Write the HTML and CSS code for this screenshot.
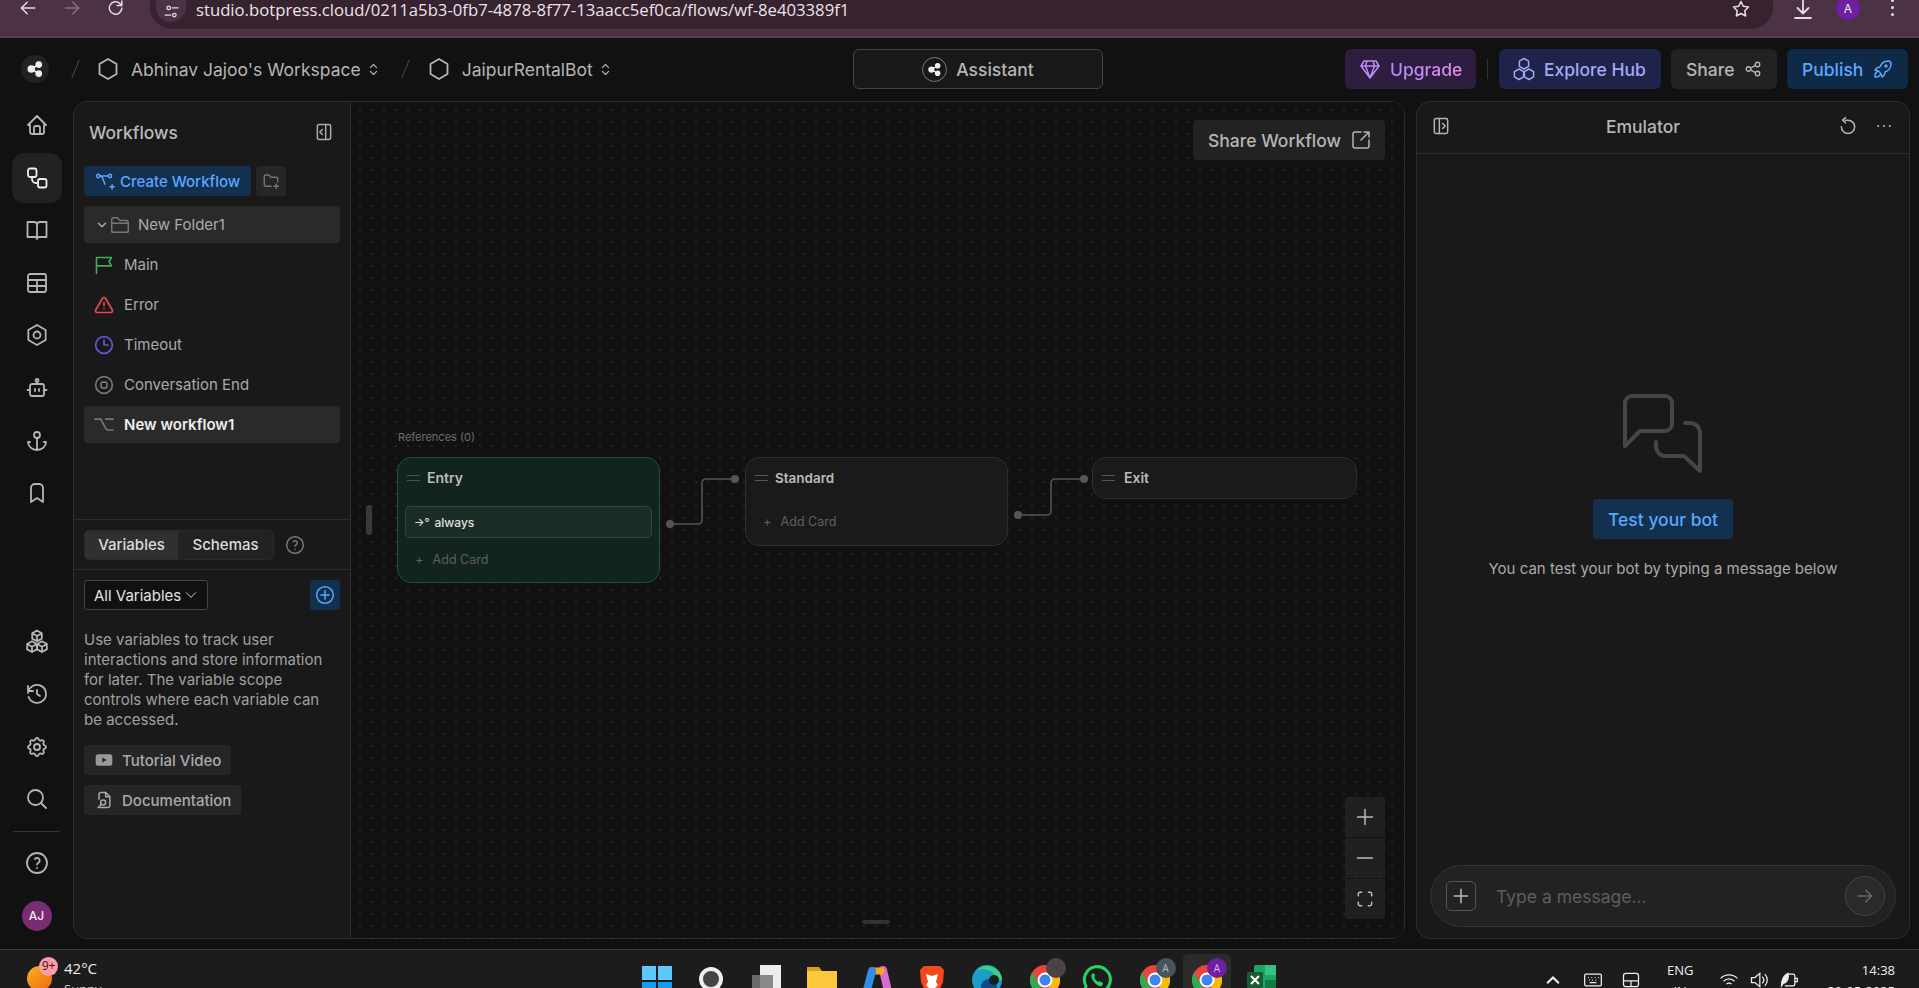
FILE: index.html
```html
<!DOCTYPE html>
<html lang="en">
<head>
<meta charset="utf-8">
<title>JaipurRentalBot - Botpress Studio</title>
<link rel="stylesheet" href="styles.css">
</head>
<body>

<!-- browser toolbar, cut off at the top of the shot -->
<div class="browser">
  <svg class="ic nav" viewBox="0 0 24 24"><path d="M20 12H5M11 5l-7 7 7 7"/></svg>
  <svg class="ic nav nav-off" viewBox="0 0 24 24"><path d="M4 12h15M13 5l7 7-7 7"/></svg>
  <svg class="ic nav" viewBox="0 0 24 24"><path d="M19 12a7.500 7.500 0 1 1-2.400-5.500L19 9M19 3.500V9h-5.500"/></svg>
  <div class="address">
    <span class="site-info"><svg class="ic" viewBox="0 0 24 24"><circle cx="8" cy="7" r="2.500"/><path d="M13 7h8M3 17h8"/><circle cx="16" cy="17" r="2.500"/></svg></span>
    <span class="url">studio.botpress.cloud/0211a5b3-0fb7-4878-8f77-13aacc5ef0ca/flows/wf-8e403389f1</span>
    <svg class="ic star" viewBox="0 0 24 24"><path d="M12 3l2.800 5.800 6.200.9-4.500 4.400 1.100 6.300L12 17.400 6.400 20.400l1.100-6.300L3 9.700l6.200-.9z"/></svg>
  </div>
  <svg class="ic download" viewBox="0 0 24 24"><path d="M12 2v13M6.500 10l5.500 5.500 5.500-5.500M4 20h16"/></svg>
  <span class="profile">A</span>
  <span class="kebab"><i></i><i></i><i></i></span>
</div>

<!-- studio header -->
<header class="topbar">
  <div class="crumbs">
    <span class="logo"><svg class="share-mark" viewBox="0 0 24 24"><path d="M7 12l10-6M7 12l10 6"/><circle cx="7" cy="12" r="4"/><circle cx="17" cy="6" r="3.500"/><circle cx="17" cy="18" r="3.500"/></svg></span>
    <span class="slash"></span>
    <svg class="ic hexa" viewBox="0 0 24 24"><path d="M12 2l8.500 5v10L12 22l-8.500-5V7z"/></svg>
    <span class="crumb">Abhinav Jajoo's Workspace</span>
    <svg class="ic updown" viewBox="0 0 24 24"><path d="M7 9l5-5 5 5M7 15l5 5 5-5"/></svg>
    <span class="slash"></span>
    <svg class="ic hexa" viewBox="0 0 24 24"><path d="M12 2l8.500 5v10L12 22l-8.500-5V7z"/></svg>
    <span class="crumb">JaipurRentalBot</span>
    <svg class="ic updown" viewBox="0 0 24 24"><path d="M7 9l5-5 5 5M7 15l5 5 5-5"/></svg>
  </div>
  <button class="assistant">
    <span class="assistant-mark"><svg class="share-mark" viewBox="0 0 24 24"><path d="M7 12l10-6M7 12l10 6"/><circle cx="7" cy="12" r="4"/><circle cx="17" cy="6" r="3.500"/><circle cx="17" cy="18" r="3.500"/></svg></span>
    Assistant
  </button>
  <div class="actions">
    <button class="act act-upgrade"><svg class="ic big" viewBox="0 0 24 24"><path d="M6 4h12l3 5-9 12L3 9zM3 9h18M9 4l-1.500 5L12 21l4.500-12L15 4"/></svg><span class="upgrade-text">Upgrade</span></button>
    <span class="act-sep"></span>
    <button class="act act-hub"><svg class="ic big" viewBox="0 0 24 24"><path d="M12 1.500l4.600 2.600v5.200L12 12 7.400 9.300V4.100zM7 12l4.600 2.600v5.200L7 22.500l-4.600-2.700v-5.200zM17 12l4.600 2.600v5.200L17 22.500l-4.600-2.700v-5.200z"/></svg>Explore Hub</button>
    <button class="act act-share">Share<svg class="ic ic-18" viewBox="0 0 24 24"><circle cx="6" cy="12" r="3"/><circle cx="18" cy="6" r="3"/><circle cx="18" cy="18" r="3"/><path d="M8.700 10.700l6.600-3.400M8.700 13.300l6.600 3.400"/></svg></button>
    <button class="act act-publish">Publish<svg class="ic big" viewBox="0 0 24 24"><path d="M4 13a8 8 0 0 1 7 7 6 6 0 0 0 3-5 9 9 0 0 0 6-8 3 3 0 0 0-3-3 9 9 0 0 0-8 6 6 6 0 0 0-5 3"/><path d="M7 14a6 6 0 0 0-3 6 6 6 0 0 0 6-3"/><circle cx="15" cy="9" r="1"/></svg></button>
  </div>
</header>

<div class="main">
  <nav class="rail">
    <a class="rail-item"><svg class="ic" viewBox="0 0 24 24"><path d="M5 12H3l9-9 9 9h-2v7a2 2 0 0 1-2 2H7a2 2 0 0 1-2-2z"/><path d="M9 21v-6a2 2 0 0 1 2-2h2a2 2 0 0 1 2 2v6"/></svg></a>
    <a class="rail-item rail-on"><svg class="ic" viewBox="0 0 24 24"><rect x="3" y="2.500" width="8.500" height="8.500" rx="2"/><rect x="13" y="13" width="8.500" height="8.500" rx="2"/><path d="M7 11v2a4 4 0 0 0 4 4h2"/></svg></a>
    <a class="rail-item"><svg class="ic" viewBox="0 0 24 24"><path d="M2.500 4H9a3 3 0 0 1 3 3v14a2 2 0 0 0-2-2H2.500zM21.500 4H15a3 3 0 0 0-3 3v14a2 2 0 0 1 2-2h7.500z"/></svg></a>
    <a class="rail-item"><svg class="ic" viewBox="0 0 24 24"><rect x="3" y="3" width="18" height="18" rx="2"/><path d="M3 9h18M3 15h18M12 9v12"/></svg></a>
    <a class="rail-item"><svg class="ic" viewBox="0 0 24 24"><path d="M12 2l8.660 5v10L12 22l-8.660-5V7z"/><circle cx="12" cy="12" r="3.500"/></svg></a>
    <a class="rail-item"><svg class="ic" viewBox="0 0 24 24"><rect x="5" y="8" width="14" height="12" rx="2"/><path d="M12 8V6M2.500 14h2.500M19 14h2.500M10 13v2M14 13v2"/><circle cx="12" cy="4.500" r="1.500"/></svg></a>
    <a class="rail-item"><svg class="ic" viewBox="0 0 24 24"><path d="M12 9v12M3 13a9 8 0 0 0 18 0M21 13h-2M5 13H3"/><circle cx="12" cy="6" r="3"/></svg></a>
    <a class="rail-item"><svg class="ic" viewBox="0 0 24 24"><path d="M18 7v14l-6-4-6 4V7a4 4 0 0 1 4-4h4a4 4 0 0 1 4 4z"/></svg></a>
    <div class="rail-low">
      <a class="rail-item"><svg class="ic" viewBox="0 0 24 24"><path d="M12 1.500l4.800 2.700v5.400L12 12.300 7.200 9.600V4.200zM7 12.300l4.800 2.700v5.400L7 23l-4.800-2.600V15zM17 12.300l4.800 2.700v5.400L17 23l-4.800-2.600V15zM7.200 4.200L12 7l4.800-2.800M12 7v5.300M2.200 15L7 17.700 11.800 15M7 17.700V23M12.200 15l4.800 2.700 4.800-2.700M17 17.700V23"/></svg></a>
      <a class="rail-item"><svg class="ic" viewBox="0 0 24 24"><path d="M12 8v4l3 2"/><path d="M3.050 11a9 9 0 1 1 .5 4M3 4v5h5"/></svg></a>
      <a class="rail-item"><svg class="ic" viewBox="0 0 24 24"><path d="M10.325 4.317c.426-1.756 2.924-1.756 3.350 0a1.724 1.724 0 0 0 2.573 1.066c1.543-.94 3.310.826 2.370 2.370a1.724 1.724 0 0 0 1.065 2.572c1.756.426 1.756 2.924 0 3.350a1.724 1.724 0 0 0-1.066 2.573c.94 1.543-.826 3.310-2.370 2.370a1.724 1.724 0 0 0-2.572 1.065c-.426 1.756-2.924 1.756-3.350 0a1.724 1.724 0 0 0-2.573-1.066c-1.543.94-3.310-.826-2.370-2.370a1.724 1.724 0 0 0-1.065-2.572c-1.756-.426-1.756-2.924 0-3.350a1.724 1.724 0 0 0 1.066-2.573c-.94-1.543.826-3.310 2.370-2.370 1 .608 2.296.07 2.572-1.065z"/><circle cx="12" cy="12" r="3"/></svg></a>
      <a class="rail-item"><svg class="ic" viewBox="0 0 24 24"><circle cx="10.500" cy="10.500" r="7.500"/><path d="M21 21l-5-5"/></svg></a>
      <div class="rail-rule"></div>
      <a class="rail-item"><svg class="ic" viewBox="0 0 24 24"><circle cx="12" cy="12" r="10"/><path d="M12 17v.01M12 13.500a1.500 1.500 0 0 1 1-1.500 2.600 2.600 0 1 0-3-4"/></svg></a>
      <span class="avatar">AJ</span>
    </div>
  </nav>

  <section class="studio">
    <aside class="side">
      <div class="side-top">
        <div class="side-head">
          <h2>Workflows</h2>
          <svg class="ic ic-20" viewBox="0 0 24 24"><rect x="4" y="3" width="16" height="18" rx="2"/><path d="M14 3v18M10 9l-3 3 3 3"/></svg>
        </div>
        <div class="side-btns">
          <button class="btn-create"><svg class="ic ic-20" viewBox="0 0 24 24"><circle cx="4" cy="6" r="2"/><circle cx="18" cy="6" r="2"/><path d="M6 6h10M8 6l4 10M18 19h5M20.500 16.500v5"/></svg>Create Workflow</button>
          <button class="btn-folder"><svg class="ic ic-18" viewBox="0 0 24 24"><path d="M12 19H5a2 2 0 0 1-2-2V6a2 2 0 0 1 2-2h4l3 3h7a2 2 0 0 1 2 2v4M16 19h6M19 16v6"/></svg></button>
        </div>
        <ul class="flows">
          <li class="flow flow-on flow-folder"><svg class="ic chev" viewBox="0 0 24 24"><path d="M6 9l6 6 6-6"/></svg><svg class="ic ic-20 dim" viewBox="0 0 24 24"><path d="M3 19V6a2 2 0 0 1 2-2h4l3 3h7a2 2 0 0 1 2 2v10a1 1 0 0 1-1 1H4a1 1 0 0 1-1-1zM3 10h18"/></svg>New Folder1</li>
          <li class="flow"><svg class="ic ic-20 green" viewBox="0 0 24 24"><path d="M3 22V3h18l-3 5 3 5H3"/></svg>Main</li>
          <li class="flow"><svg class="ic ic-20 red" viewBox="0 0 24 24"><path d="M12 9v4M12 16.500v.01M10.300 3.900L2 18a2 2 0 0 0 1.700 3h16.600a2 2 0 0 0 1.700-3L13.700 3.900a2 2 0 0 0-3.400 0z"/></svg>Error</li>
          <li class="flow"><svg class="ic ic-20 indigo" viewBox="0 0 24 24"><circle cx="12" cy="12" r="10"/><path d="M12 6v6h5"/></svg>Timeout</li>
          <li class="flow"><svg class="ic ic-20 dim" viewBox="0 0 24 24"><circle cx="12" cy="12" r="10"/><rect x="8.500" y="8.500" width="7" height="7" rx="1.500"/></svg>Conversation End</li>
          <li class="flow flow-on flow-bold"><svg class="ic ic-20 dim" viewBox="0 0 24 24"><path d="M1 5h7l6 11a3 3 0 0 0 3 2h6M14 5h9"/></svg>New workflow1</li>
        </ul>
      </div>

      <div class="side-tabs">
        <div class="tabs">
          <span class="tab tab-on">Variables</span>
          <span class="tab">Schemas</span>
        </div>
        <svg class="ic ic-20 dim" viewBox="0 0 24 24"><circle cx="12" cy="12" r="10"/><path d="M12 17v.01M12 13.500a1.500 1.500 0 0 1 1-1.500 2.600 2.600 0 1 0-3-4"/></svg>
      </div>

      <div class="side-vars">
        <div class="vars-row">
          <button class="select">All Variables<svg class="ic ic-14" viewBox="0 0 24 24"><path d="M4 8l8 8 8-8"/></svg></button>
          <button class="btn-add"><svg class="ic ic-20" viewBox="0 0 24 24"><circle cx="12" cy="12" r="10"/><path d="M12 7v10M7 12h10"/></svg></button>
        </div>
        <p class="vars-help">Use variables to track user interactions and store information for later. The variable scope controls where each variable can be accessed.</p>
        <button class="btn-link"><svg class="yt" viewBox="0 0 24 24"><rect x="2" y="5" width="20" height="14" rx="3"/><path class="yt-play" d="M10 9l5 3-5 3z"/></svg>Tutorial Video</button>
        <button class="btn-link"><svg class="ic ic-20" viewBox="0 0 24 24"><path d="M7 21h10a2 2 0 0 0 2-2V8l-5-5H8a2 2 0 0 0-2 2v6"/><circle cx="11" cy="15" r="3"/><path d="M8.800 17.200L5 21M19 8h-5V3"/></svg>Documentation</button>
      </div>
    </aside>

    <div class="canvas">
      <svg class="wires" viewBox="0 0 1053 836">
        <path d="M319 422H347q4 0 4-4V381q0-4 4-4H384"/>
        <path d="M667 413H696q4 0 4-4V381q0-4 4-4H733"/>
        <circle cx="319" cy="422" r="4"/>
        <circle cx="384" cy="377" r="4"/>
        <circle cx="667" cy="413" r="4"/>
        <circle cx="733" cy="377" r="4"/>
      </svg>

      <button class="share-flow">Share Workflow<svg class="ic big" viewBox="0 0 24 24"><path d="M12 4H6a2 2 0 0 0-2 2v12a2 2 0 0 0 2 2h12a2 2 0 0 0 2-2v-6M12 12l8-8M15 4h5v5"/></svg></button>

      <span class="refs">References (0)</span>

      <div class="node node-entry">
        <div class="node-head"><span class="grip"></span>Entry</div>
        <div class="card-always"><span class="always-arrow">&#8594;&#176;</span>always</div>
        <div class="add-card"><span>+</span>Add Card</div>
      </div>
      <div class="node node-std">
        <div class="node-head"><span class="grip"></span>Standard</div>
        <div class="add-card add-card-std"><span>+</span>Add Card</div>
      </div>
      <div class="node node-exit">
        <div class="node-head"><span class="grip"></span>Exit</div>
      </div>

      <span class="drag-left"></span>
      <span class="drag-bottom"></span>

      <div class="zoomer">
        <button><svg class="ic ic-20" viewBox="0 0 24 24"><path d="M12 3v18M3 12h18"/></svg></button>
        <button><svg class="ic ic-20" viewBox="0 0 24 24"><path d="M3 12h18"/></svg></button>
        <button><svg class="ic ic-20" viewBox="0 0 24 24"><path d="M4 8V6a2 2 0 0 1 2-2h2M16 4h2a2 2 0 0 1 2 2v2M20 16v2a2 2 0 0 1-2 2h-2M8 20H6a2 2 0 0 1-2-2v-2"/></svg></button>
      </div>
    </div>
  </section>

  <section class="emu">
    <div class="emu-head">
      <svg class="ic ic-20" viewBox="0 0 24 24"><rect x="4" y="3" width="16" height="18" rx="2"/><path d="M10 3v18M14 9l3 3-3 3"/></svg>
      <span class="emu-title">Emulator</span>
      <svg class="ic ic-20" viewBox="0 0 24 24"><path d="M9 5h3a8 8 0 1 1-8 8M9 2L5.500 5 9 8"/></svg>
      <svg class="ic ic-20 emu-more" viewBox="0 0 24 24"><path d="M5 12v.01M12 12v.01M19 12v.01"/></svg>
    </div>
    <div class="emu-body">
      <svg class="chat-ic" viewBox="0 0 80 80"><path d="M2 52V9a7 7 0 0 1 7-7h33a7 7 0 0 1 7 7v21a7 7 0 0 1-7 7H17z"/><path d="M62 29h5a10 10 0 0 1 10 9v39L61 62H41a10 10 0 0 1-8-9v-5"/></svg>
      <button class="btn-test">Test your bot</button>
      <p class="emu-hint">You can test your bot by typing a message below</p>
    </div>
    <div class="composer">
      <button class="composer-add"><svg class="ic ic-20" viewBox="0 0 24 24"><path d="M12 4v16M4 12h16"/></svg></button>
      <span class="composer-ph">Type a message...</span>
      <button class="composer-send"><svg class="ic ic-20" viewBox="0 0 24 24"><path d="M4 12h16M13 5l7 7-7 7"/></svg></button>
    </div>
  </section>
</div>

<!-- windows taskbar, also cut off by the shot -->
<footer class="taskbar">
  <div class="weather">
    <span class="sun"></span>
    <span class="badge">9+</span>
    <div class="weather-text"><b>42°C</b><span>Sunny</span></div>
  </div>

  <div class="apps">
    <span class="app"><svg viewBox="0 0 30 30"><path fill="#5cc8fb" d="M0 1h14v14H0zM16 1h14v14H16z"/><path fill="#1a9bf0" d="M0 17h14v14H0zM16 17h14v14H16z"/></svg></span>
    <span class="app"><svg viewBox="0 0 30 30"><circle cx="14" cy="14" r="10" fill="#444" stroke="#eee" stroke-width="4"/><path d="M20 22l6 7" stroke="#eee" stroke-width="4"/></svg></span>
    <span class="app"><svg viewBox="0 0 30 30"><rect x="8" y="0" width="21" height="26" fill="#ededed"/><rect x="0" y="10" width="21" height="24" fill="#777" opacity=".85"/></svg></span>
    <span class="app"><svg viewBox="0 0 30 30"><path fill="#d9a11a" d="M0 2h12l3 4H0z"/><rect y="6" width="30" height="26" fill="#fcc93d"/><rect x="6" y="25" width="18" height="8" fill="#2c8fd6"/></svg></span>
    <span class="app"><svg viewBox="0 0 30 30"><path d="M21 5l4 17" stroke="#d96bd0" stroke-width="8" stroke-linecap="round"/><path d="M10 6h9" stroke="#f5a623" stroke-width="7" stroke-linecap="round"/><path d="M10 6L5 25" stroke="#2f8fe8" stroke-width="8" stroke-linecap="round"/></svg></span>
    <span class="app"><svg viewBox="0 0 30 30"><path fill="#f4481d" d="M7 1h16l4 4-1 12-5 11-6 3-6-3-5-11L3 5z"/><path fill="#fff" d="M9 9l6 2 6-2-2 8 2 3-6 6-6-6 2-3z"/></svg></span>
    <span class="app"><svg viewBox="0 0 30 30"><circle cx="15" cy="15" r="15" fill="#18a0c9"/><path fill="#3ed07a" d="M30 15A15 15 0 0 0 4 6c8-4 20-1 20 9z"/><circle cx="17" cy="22" r="8" fill="#0c4c8a"/><circle cx="22" cy="15" r="5" fill="#1c1c1c"/></svg></span>
    <span class="app"><svg class="chrome" viewBox="0 0 30 30"><use href="#chrome-logo"/></svg><span class="pin pin-photo"></span></span>
    <span class="app"><svg viewBox="0 0 30 30"><path d="M2 28l2-7A13 13 0 1 1 9 26z" fill="none" stroke="#25d366" stroke-width="3"/><path d="M10 9q-2 3 2 8t8 4l1-3-4-2-1 1q-3-2-4-5l1-1-1-3z" fill="#25d366"/></svg></span>
    <span class="app"><svg class="chrome" viewBox="0 0 30 30"><use href="#chrome-logo"/></svg><span class="pin pin-gray">A</span></span>
    <span class="app app-on"><svg class="chrome" viewBox="0 0 30 30"><use href="#chrome-logo"/></svg><span class="pin pin-purple">A</span></span>
    <span class="app"><svg viewBox="0 0 30 30"><rect x="7" y="0" width="22" height="30" rx="2" fill="#21a366"/><rect x="18" y="0" width="11" height="10" fill="#33c481"/><rect x="18" y="15" width="11" height="15" fill="#107c41"/><rect x="0" y="7" width="16" height="16" rx="1" fill="#185c37"/><path d="M4 11l8 8M12 11l-8 8" stroke="#fff" stroke-width="2"/></svg></span>
  </div>

  <div class="tray">
    <svg class="tray-ic chevup" viewBox="0 0 24 24"><path d="M5 16l7-7 7 7"/></svg>
    <svg class="tray-ic tray-kbd" viewBox="0 0 24 24"><rect x="2" y="5" width="20" height="14" rx="1.500"/><path d="M6 9h1M10 9h1M14 9h1M18 9h1M7 12h1M11 12h1M15 12h1M8 15h8"/></svg>
    <svg class="tray-ic tray-tablet" viewBox="0 0 24 24"><rect x="3" y="4" width="18" height="16" rx="3"/><path d="M3 13h18M12 13v7"/></svg>
    <div class="lang">ENG<br>IN</div>
    <svg class="tray-ic" viewBox="0 0 24 24"><path d="M2 10a14 14 0 0 1 20 0M5.500 13.500a9 9 0 0 1 13 0M9 17a4 4 0 0 1 6 0M12 20v.5"/></svg>
    <svg class="tray-ic" viewBox="0 0 24 24"><path d="M3 9v6h4l6 5V4L7 9zM16 8a6 6 0 0 1 0 8M19 5a10 10 0 0 1 0 14"/></svg>
    <svg class="tray-ic" viewBox="0 0 24 24"><path d="M9 5h8a2 2 0 0 1 2 2v10a2 2 0 0 1-2 2H7M19 10h3v4h-3"/><path class="leaf" d="M3 19c0-8 3-13 8-15 1 6-1 11-6 12z"/></svg>
    <div class="clock">14:38<br>20-05-2025</div>
  </div>
</footer>

<svg class="defs" width="0" height="0">
  <symbol id="chrome-logo" viewBox="0 0 30 30">
    <circle cx="15" cy="15" r="15" fill="#e8453c"/>
    <path fill="#34a853" d="M15 30A15 15 0 0 1 2 7.500L9.500 20z"/>
    <path fill="#fbbc05" d="M15 30a15 15 0 0 0 13-22.500H15L21 19z"/>
    <circle cx="15" cy="15" r="7.500" fill="#fff"/>
    <circle cx="15" cy="15" r="5.500" fill="#3c85f0"/>
  </symbol>
</svg>

</body>
</html>
```

FILE: styles.css
```css
* { box-sizing: border-box; }

html, body { margin: 0; height: 100%; }

body {
  width: 1919px;
  height: 988px;
  overflow: hidden;
  display: flex;
  flex-direction: column;
  background: #111;
  color: #b5b5b5;
  font-family: Inter, "Liberation Sans", sans-serif;
  font-size: 15px;
}

button {
  font: inherit;
  color: inherit;
  border: 0;
  background: none;
  padding: 0;
  display: inline-flex;
  align-items: center;
}

h2, p, ul { margin: 0; padding: 0; }

.ic {
  width: 24px;
  height: 24px;
  flex: none;
  fill: none;
  stroke: currentColor;
  stroke-width: 1.8;
  stroke-linecap: round;
  stroke-linejoin: round;
}

.ic-20 { width: 20px; height: 20px; }
.ic-18 { width: 18px; height: 18px; }
.ic-14 { width: 14px; height: 14px; }
.big { margin: 0 -2px; stroke-width: 1.500; }
.dim { color: #777; }
.green { color: #46a758; }
.red { color: #e5484d; }
.indigo { color: #5b5bd6; }
.defs { position: absolute; }

/* browser */
.browser {
  height: 38px;
  flex: none;
  display: flex;
  align-items: flex-start;
  background: #4b3245;
  border-bottom: 2px solid #57404f;
  color: #e6dbe2;
}

.nav { width: 20px; height: 20px; margin: -2px 0 0 18px; }
.nav + .nav { margin-left: 24px; }
.nav-off { color: #86707f; }

.address {
  width: 1623px;
  height: 29px;
  margin-left: 24px;
  padding-left: 6px;
  display: flex;
  align-items: flex-start;
  background: #37222f;
  border-radius: 0 0 22px 22px;
}

.site-info {
  width: 30px;
  height: 22px;
  display: flex;
  align-items: center;
  justify-content: center;
  background: #4b3245;
  border-radius: 0 0 15px 15px;
}

.site-info .ic { width: 17px; height: 17px; }

.url {
  margin: 0 0 0 10px;
  font-family: "Open Sans", sans-serif;
  font-size: 16.700px;
  line-height: 20px;
  color: #ece4e9;
}

.star { width: 20px; height: 20px; margin: -1px 22px 0 auto; }
.download { width: 24px; height: 24px; margin: -2px 0 0 18px; }

.profile {
  width: 24px;
  height: 24px;
  margin: -4px 0 0 21px;
  border-radius: 50%;
  background: #6f1fa0;
  color: #eee;
  font-size: 12px;
  line-height: 26px;
  text-align: center;
}

.kebab {
  margin: -1px 0 0 31px;
  display: flex;
  flex-direction: column;
  gap: 4px;
}

.kebab i { width: 3px; height: 3px; border-radius: 50%; background: #e6dbe2; }

/* header */
.topbar {
  height: 63px;
  flex: none;
  padding: 11px 11px 0 21px;
  display: grid;
  grid-template-columns: 832px 250px 1fr;
  align-items: start;
}

.crumbs { height: 40px; display: flex; align-items: center; font-size: 17.500px; }

.logo {
  width: 28px;
  height: 28px;
  border-radius: 50%;
  background: #222;
  display: flex;
  align-items: center;
  justify-content: center;
}

.share-mark { width: 18px; height: 18px; fill: #eee; stroke: #eee; stroke-width: 2; }

.slash {
  width: 1px;
  height: 20px;
  margin: 0 20px 0 26px;
  background: #444;
  transform: rotate(22deg);
}

.hexa { margin-right: 12px; }
.hexa + .crumb { margin-left: -1px; }
.updown { width: 15px; height: 15px; margin: 1px 0 0 5px; }
.updown + .slash { margin: 0 21px 0 24px; }

.assistant {
  height: 40px;
  justify-content: center;
  gap: 9px;
  background: #181818;
  border: 1px solid #444;
  border-radius: 6px;
  font-size: 17.500px;
  font-weight: 500;
}

.assistant-mark {
  width: 25px;
  height: 25px;
  display: flex;
  align-items: center;
  justify-content: center;
  border: 1px solid #777;
  border-radius: 50%;
}

.assistant-mark .share-mark { width: 15px; height: 15px; }

.actions { display: flex; justify-content: flex-end; align-items: center; }

.act {
  height: 40px;
  padding: 0 14px 0 15px;
  border-radius: 6px;
  font-size: 17.500px;
  font-weight: 500;
  gap: 10px;
}

.act-sep { width: 1px; height: 20px; margin: 0 11px; background: #333; }
.act-upgrade { width: 131px; background: #2e1d3e; color: #bd8cf5; }
.upgrade-text { background: linear-gradient(90deg, #b18cff, #e58ce8); -webkit-background-clip: text; background-clip: text; color: transparent; }
.act-hub { width: 162px; background: #1f2349; color: #a4a8f7; margin-right: 10px; }
.act-share { width: 106px; background: #222; margin-right: 10px; }
.act-publish { width: 121px; background: #0f2a47; color: #5aa9ff; }

/* main area */
.main {
  height: 838px;
  flex: none;
  display: flex;
  padding-right: 9px;
}

.rail {
  width: 73px;
  flex: none;
  margin-top: -1px;
  display: flex;
  flex-direction: column;
  align-items: center;
  gap: 2.600px;
  padding-bottom: 8px;
  color: #b5b5b5;
}

.rail-item {
  width: 50px;
  height: 50px;
  flex: none;
  display: flex;
  align-items: center;
  justify-content: center;
  border-radius: 12px;
}

.rail-on { background: #222; color: #eee; }

.rail-low {
  margin-top: auto;
  display: flex;
  flex-direction: column;
  align-items: center;
  gap: 2.600px;
}

.rail-rule { width: 47px; height: 1px; margin: 4px 0; background: #333; }

.avatar {
  width: 30px;
  height: 30px;
  margin-top: 10px;
  border-radius: 50%;
  background: #7a2c72;
  color: #eee;
  font-size: 12px;
  font-weight: 500;
  line-height: 30px;
  text-align: center;
}

.studio {
  width: 1332px;
  flex: none;
  display: flex;
  border: 1px solid #2d2d2d;
  border-radius: 14px;
  overflow: hidden;
}

/* workflows sidebar */
.side {
  width: 277px;
  flex: none;
  background: #191919;
  border-right: 1px solid #2d2d2d;
}

.side-top { height: 417px; padding: 0 10px; }

.side-head {
  height: 64px;
  padding: 0 0 4px 5px;
  margin-right: 6px;
  display: flex;
  align-items: center;
  justify-content: space-between;
  color: #aaa;
}

.side-head h2 { font-size: 17.400px; font-weight: 500; color: #bbb; }

.side-btns { display: flex; gap: 5px; margin-bottom: 10px; }

.btn-create {
  width: 167px;
  height: 30px;
  padding-left: 11px;
  gap: 5px;
  background: #14304f;
  color: #59a8ff;
  border-radius: 4px;
  font-weight: 500;
}

.btn-folder {
  width: 30px;
  height: 30px;
  justify-content: center;
  background: #262626;
  color: #777;
  border-radius: 4px;
}

.flows { list-style: none; display: flex; flex-direction: column; gap: 3px; }

.flow {
  height: 37px;
  padding-left: 10px;
  display: flex;
  align-items: center;
  gap: 10px;
  border-radius: 4px;
  color: #aaa;
}

.flow .ic-20 { stroke-width: 2; }
.flow-on { background: #2a2a2a; }
.flow-folder { gap: 0; padding-left: 11px; }
.flow-folder .ic-20 { width: 22px; height: 22px; margin-right: 7px; stroke-width: 1.600; }
.chev { width: 14px; height: 14px; stroke-width: 2.500; }
.flow-bold { color: #eee; font-weight: 600; }

.side-tabs {
  height: 51px;
  padding: 10px 10px;
  display: flex;
  gap: 11px;
  align-items: center;
  border-top: 1px solid #2d2d2d;
  border-bottom: 1px solid #2d2d2d;
}

.tabs {
  width: 190px;
  height: 30px;
  display: flex;
  background: #222;
  border: 1px solid #2a2a2a;
  border-radius: 5px;
  overflow: hidden;
}

.tab {
  width: 94px;
  line-height: 28px;
  text-align: center;
  color: #ddd;
  font-weight: 500;
}

.tab-on { background: #303030; }
.tab + .tab { width: 96px; }

.side-vars { padding: 10px; }

.vars-row { display: flex; justify-content: space-between; }

.select {
  width: 124px;
  height: 30px;
  padding-left: 9px;
  gap: 3px;
  background: #111;
  border: 1px solid #444;
  border-radius: 3px;
  color: #e4e4e4;
}

.select .ic { stroke-width: 1.500; }

.btn-add {
  width: 30px;
  height: 30px;
  justify-content: center;
  background: #14304f;
  color: #59a8ff;
  border-radius: 3px;
}

.vars-help {
  margin: 20px 0 15px;
  line-height: 20px;
  color: #a0a0a0;
  width: 250px;
}

.btn-link {
  height: 30px;
  padding: 0 10px;
  margin-bottom: 10px;
  gap: 8px;
  background: #262626;
  border-radius: 4px;
  font-weight: 500;
  color: #aaa;
}

.yt { width: 20px; height: 20px; fill: #999; }
.yt-play { fill: #262626; }

/* canvas */
.canvas {
  flex: 1;
  position: relative;
  background-color: #111;
  background-image: radial-gradient(circle, #252525 0.8px, transparent 1px);
  background-size: 12px 12px;
  background-position: 3px 2px;
}

.wires { position: absolute; left: 0; top: 0; width: 1053px; height: 836px; }
.wires path { fill: none; stroke: #555; stroke-width: 1.500; }
.wires circle { fill: #555; }

.share-flow {
  position: absolute;
  right: 19px;
  top: 18px;
  width: 192px;
  height: 40px;
  padding-left: 15px;
  gap: 10px;
  background: #222;
  border-radius: 4px;
  font-size: 17.500px;
  font-weight: 500;
  color: #b5b5b5;
}

.refs { position: absolute; left: 47px; top: 328px; font-size: 11px; color: #6e6e6e; }

.node {
  position: absolute;
  top: 355px;
  width: 263px;
  background: rgba(28, 28, 28, .9);
  border: 1px solid #2e2e2e;
  border-radius: 14px;
}

.node-entry { left: 46px; height: 126px; background: rgba(19, 39, 31, .95); border-color: #1f4f3e; }
.node-std { left: 394px; height: 89px; }
.node-exit { left: 741px; width: 265px; height: 42px; }

.node-head {
  height: 39px;
  padding-left: 8px;
  display: flex;
  align-items: center;
  gap: 7px;
  font-size: 14px;
  font-weight: 600;
  color: #bbb;
}

.node-std .node-head { font-size: 13.500px; }
.node-exit .node-head { gap: 9px; }
.grip { width: 13px; height: 6px; border-top: 1px solid #555; border-bottom: 1px solid #555; margin-left: 1px; }
.node-entry .grip { border-color: #3d5a4c; }

.card-always {
  height: 32px;
  margin: 9px 7px 0;
  padding-left: 8px;
  display: flex;
  align-items: center;
  background: #1b2e26;
  border: 1px solid #32453c;
  border-radius: 5px;
  font-size: 12px;
  font-weight: 500;
  color: #e0e0e0;
}

.always-arrow { margin-right: 5px; font-size: 11px; }

.add-card {
  margin: 13px 0 0 17px;
  display: flex;
  align-items: center;
  gap: 9px;
  font-size: 12.500px;
  color: #5f5f5f;
}

.add-card span { font-size: 13px; }
.add-card-std { margin: 16px 0 0 17px; }

.drag-left {
  position: absolute;
  left: 15px;
  top: 403px;
  width: 6px;
  height: 30px;
  background: #3a3a3e;
  border-radius: 3px;
}

.drag-bottom {
  position: absolute;
  left: 511px;
  top: 818px;
  width: 28px;
  height: 4px;
  background: #333;
  border-radius: 2px;
}

.zoomer {
  position: absolute;
  right: 19px;
  top: 695px;
  display: flex;
  flex-direction: column;
  gap: 1px;
  color: #bbb;
}

.zoomer button {
  width: 40px;
  height: 40px;
  justify-content: center;
  background: #202020;
}

.zoomer button:first-child { border-radius: 4px 4px 0 0; }
.zoomer button:last-child { border-radius: 0 0 4px 4px; }

/* emulator */
.emu {
  width: 494px;
  flex: none;
  margin-left: 11px;
  display: flex;
  flex-direction: column;
  background: #191919;
  border: 1px solid #2d2d2d;
  border-radius: 14px;
}

.emu-head {
  height: 52px;
  flex: none;
  padding: 0 15px 3px 14px;
  display: flex;
  align-items: center;
  border-bottom: 1px solid #2d2d2d;
}

.emu-title { flex: 1; text-align: center; font-size: 17.500px; font-weight: 500; padding-right: 3px; }
.emu-more { margin-left: 16px; stroke-width: 2.500; }

.emu-body {
  flex: 1;
  padding-top: 240px;
  display: flex;
  flex-direction: column;
  align-items: center;
}

.chat-ic {
  width: 80px;
  height: 80px;
  fill: none;
  stroke: #464646;
  stroke-width: 4;
  stroke-linecap: round;
  stroke-linejoin: round;
}

.btn-test {
  height: 40px;
  margin-top: 25px;
  padding: 0 15px;
  background: #14304f;
  color: #59a8ff;
  border-radius: 4px;
  font-size: 17.500px;
  font-weight: 500;
}

.emu-hint { margin-top: 20px; color: #aaa; }

.composer {
  height: 62px;
  flex: none;
  margin: 0 13px 11px;
  padding: 0 10px 0 15px;
  display: flex;
  align-items: center;
  background: #222;
  border: 1px solid #333;
  border-radius: 31px;
}

.composer-add {
  width: 30px;
  height: 30px;
  justify-content: center;
  border: 1px solid #555;
  border-radius: 5px;
  color: #bbb;
}

.composer-ph { margin-left: 20px; flex: 1; font-size: 17.500px; color: #5e5e5e; }

.composer-send {
  width: 40px;
  height: 40px;
  justify-content: center;
  background: #2a2a2a;
  border: 1px solid #444;
  border-radius: 50%;
  color: #666;
}

/* taskbar */
.taskbar {
  height: 39px;
  flex: none;
  margin-top: 10px;
  display: grid;
  grid-template-columns: 1fr auto 1fr;
  background: #1c1c1c;
  border-top: 1px solid #3c3c3c;
  overflow: hidden;
  font-family: "Open Sans", sans-serif;
  color: #eee;
}

.weather { position: relative; padding-left: 64px; }

.sun {
  position: absolute;
  left: 27px;
  top: 16px;
  width: 25px;
  height: 25px;
  border-radius: 50%;
  background: linear-gradient(135deg, #f5b321, #f2650f);
}

.badge {
  position: absolute;
  left: 39px;
  top: 7px;
  width: 19px;
  height: 19px;
  border-radius: 50%;
  background: #ff9ca6;
  color: #222;
  font-size: 12px;
  line-height: 18px;
  text-align: center;
}

.weather-text { padding-top: 8px; font-size: 15px; line-height: 20px; }
.weather-text b { display: block; font-weight: 400; }
.weather-text span { color: #ccc; font-size: 13px; }

.apps { display: flex; }

.app {
  width: 55px;
  height: 38px;
  position: relative;
  display: flex;
  justify-content: center;
  padding-top: 15px;
}

.app svg { width: 30px; height: 30px; flex: none; }
.app .chrome { margin-left: 6px; }

.app-on {
  width: 48px;
  margin: 4px 3.500px 0;
  padding-top: 11px;
  background: #2b2b2b;
  border-radius: 5px 5px 0 0;
}

.app-on .chrome { margin-left: 0; }

.pin {
  position: absolute;
  left: 31px;
  top: 8px;
  width: 20px;
  height: 20px;
  border-radius: 50%;
  font-size: 10px;
  line-height: 20px;
  text-align: center;
}

.pin-photo { background: #4a4444; }
.pin-gray { background: #47535e; color: #bbb; }
.pin-purple { background: #6f1fa0; color: #d8b5ee; left: 24px; top: 4px; }

.tray {
  display: flex;
  justify-content: flex-end;
  align-items: flex-start;
  padding: 10px 24px 0 0;
  color: #eee;
}

.tray-ic {
  width: 20px;
  height: 20px;
  margin: 10px 0 0 10px;
  flex: none;
  fill: none;
  stroke: #eee;
  stroke-width: 1.500;
}

.chevup { margin-right: 10px; stroke-width: 2.500; }
.tray-tablet { margin-left: 18px; }
.leaf { fill: #eee; }

.lang {
  width: 60px;
  margin: 0 -1px 0 9px;
  text-align: center;
  font-size: 13px;
  line-height: 21px;
}

.clock {
  margin-left: 28px;
  text-align: right;
  font-size: 13px;
  line-height: 21px;
}
```
